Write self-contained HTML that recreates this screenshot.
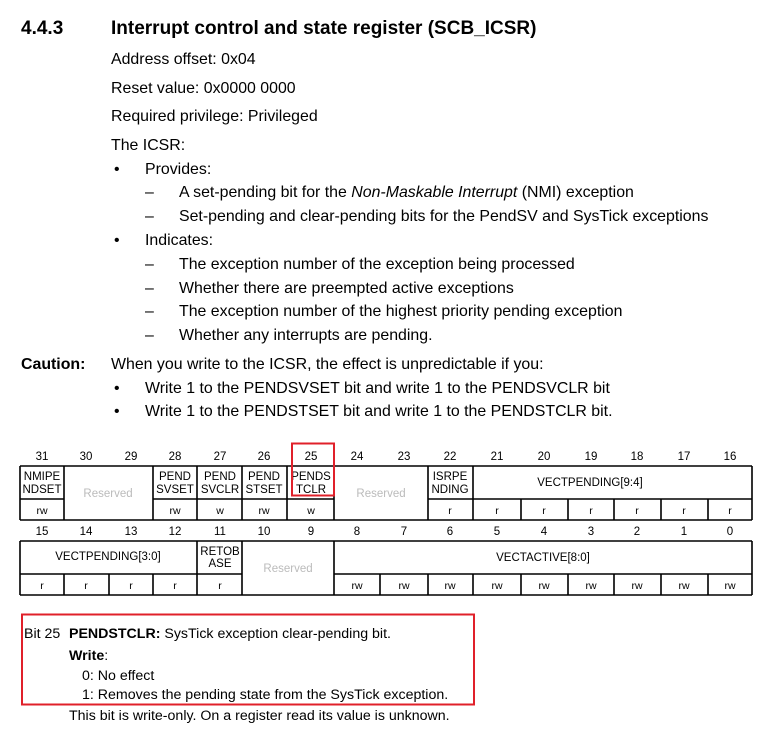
<!DOCTYPE html>
<html><head><meta charset="utf-8"><style>
body{margin:0;width:769px;height:735px;background:#fff;font-family:"Liberation Sans",Arial,sans-serif;color:#000;position:relative;overflow:hidden}
.t{position:absolute;white-space:nowrap;font-size:15.9px;line-height:20px}
.s{position:absolute;white-space:nowrap;font-size:14.2px;line-height:16px}
</style></head><body>
<div class="t" style="left:21px;top:17px;font-size:19px;line-height:24px;font-weight:bold">4.4.3</div>
<div class="t" style="left:111px;top:17px;font-size:19px;line-height:24px;font-weight:bold">Interrupt control and state register (SCB_ICSR)</div>
<div class="t" style="left:111px;top:50px">Address offset: 0x04</div>
<div class="t" style="left:111px;top:79px">Reset value: 0x0000 0000</div>
<div class="t" style="left:111px;top:107px">Required privilege: Privileged</div>
<div class="t" style="left:111px;top:136px">The ICSR:</div>
<div class="t" style="left:114px;top:160px">•</div><div class="t" style="left:145px;top:160px">Provides:</div>
<div class="t" style="left:145px;top:183px">–</div><div class="t" style="left:179px;top:183px">A set-pending bit for the <i>Non-Maskable Interrupt</i> (NMI) exception</div>
<div class="t" style="left:145px;top:207px">–</div><div class="t" style="left:179px;top:207px">Set-pending and clear-pending bits for the PendSV and SysTick exceptions</div>
<div class="t" style="left:114px;top:231px">•</div><div class="t" style="left:145px;top:231px">Indicates:</div>
<div class="t" style="left:145px;top:255px">–</div><div class="t" style="left:179px;top:255px">The exception number of the exception being processed</div>
<div class="t" style="left:145px;top:279px">–</div><div class="t" style="left:179px;top:279px">Whether there are preempted active exceptions</div>
<div class="t" style="left:145px;top:302px">–</div><div class="t" style="left:179px;top:302px">The exception number of the highest priority pending exception</div>
<div class="t" style="left:145px;top:326px">–</div><div class="t" style="left:179px;top:326px">Whether any interrupts are pending.</div>
<div class="t" style="left:21px;top:355px;font-weight:bold">Caution:</div>
<div class="t" style="left:111px;top:355px">When you write to the ICSR, the effect is unpredictable if you:</div>
<div class="t" style="left:114px;top:379px">•</div><div class="t" style="left:145px;top:379px">Write 1 to the PENDSVSET bit and write 1 to the PENDSVCLR bit</div>
<div class="t" style="left:114px;top:402px">•</div><div class="t" style="left:145px;top:402px">Write 1 to the PENDSTSET bit and write 1 to the PENDSTCLR bit.</div>

<svg style="position:absolute;left:0;top:0" width="769" height="735" font-family="Liberation Sans, Arial, sans-serif">
<g stroke="#000" stroke-width="1.6" fill="none">
<line x1="20" y1="466" x2="752" y2="466"/><line x1="20" y1="520" x2="752" y2="520"/>
<line x1="20" y1="499" x2="64" y2="499"/><line x1="153" y1="499" x2="334" y2="499"/><line x1="428" y1="499" x2="752" y2="499"/>
<path d="M20 466V520M64 466V520M153 466V520M197 466V520M242 466V520M287 466V520M334 466V520M428 466V520M473 466V520M752 466V520M521 499V520M568 499V520M614 499V520M661 499V520M708 499V520"/>
<line x1="20" y1="541" x2="752" y2="541"/><line x1="20" y1="595" x2="752" y2="595"/>
<line x1="20" y1="574" x2="242" y2="574"/><line x1="334" y1="574" x2="752" y2="574"/>
<path d="M20 541V595M197 541V595M242 541V595M334 541V595M752 541V595M64 574V595M109 574V595M153 574V595M380 574V595M428 574V595M473 574V595M521 574V595M568 574V595M614 574V595M661 574V595M708 574V595"/>
</g>
<g font-size="11.5" text-anchor="middle" fill="#000">
<text x="42" y="460">31</text><text x="86" y="460">30</text><text x="131" y="460">29</text><text x="175" y="460">28</text><text x="220" y="460">27</text><text x="264" y="460">26</text><text x="311" y="460">25</text><text x="357" y="460">24</text><text x="404" y="460">23</text><text x="450" y="460">22</text><text x="497" y="460">21</text><text x="544" y="460">20</text><text x="591" y="460">19</text><text x="637" y="460">18</text><text x="684" y="460">17</text><text x="730" y="460">16</text>
<text x="42" y="535">15</text><text x="86" y="535">14</text><text x="131" y="535">13</text><text x="175" y="535">12</text><text x="220" y="535">11</text><text x="264" y="535">10</text><text x="311" y="535">9</text><text x="357" y="535">8</text><text x="404" y="535">7</text><text x="450" y="535">6</text><text x="497" y="535">5</text><text x="544" y="535">4</text><text x="591" y="535">3</text><text x="637" y="535">2</text><text x="684" y="535">1</text><text x="730" y="535">0</text>
</g>
<g font-size="11.5" text-anchor="middle" fill="#000">
<text x="42" y="480">NMIPE</text><text x="42" y="493">NDSET</text>
<text x="175" y="480">PEND</text><text x="175" y="493">SVSET</text>
<text x="220" y="480">PEND</text><text x="220" y="493">SVCLR</text>
<text x="264" y="480">PEND</text><text x="264" y="493">STSET</text>
<text x="311" y="480">PENDS</text><text x="311" y="493">TCLR</text>
<text x="450" y="480">ISRPE</text><text x="450" y="493">NDING</text>
<text x="590" y="486">VECTPENDING[9:4]</text>
<text x="108" y="560">VECTPENDING[3:0]</text>
<text x="220" y="555">RETOB</text><text x="220" y="567">ASE</text>
<text x="543" y="561">VECTACTIVE[8:0]</text>
</g>
<g font-size="11.5" text-anchor="middle" fill="#bbb">
<text x="108" y="497">Reserved</text><text x="381" y="497">Reserved</text><text x="288" y="572">Reserved</text>
</g>
<g font-size="10.5" text-anchor="middle" fill="#000">
<text x="42" y="514">rw</text><text x="175" y="514">rw</text><text x="220" y="514">w</text><text x="264" y="514">rw</text><text x="311" y="514">w</text>
<text x="450" y="514">r</text><text x="497" y="514">r</text><text x="544" y="514">r</text><text x="591" y="514">r</text><text x="637" y="514">r</text><text x="684" y="514">r</text><text x="730" y="514">r</text>
<text x="42" y="589">r</text><text x="86" y="589">r</text><text x="131" y="589">r</text><text x="175" y="589">r</text><text x="220" y="589">r</text>
<text x="357" y="589">rw</text><text x="404" y="589">rw</text><text x="450" y="589">rw</text><text x="497" y="589">rw</text><text x="544" y="589">rw</text><text x="591" y="589">rw</text><text x="637" y="589">rw</text><text x="684" y="589">rw</text><text x="730" y="589">rw</text>
</g>
<rect x="292" y="443.5" width="42" height="52" fill="none" stroke="#e0202a" stroke-width="2"/>
<rect x="22" y="614.5" width="452" height="90" fill="none" stroke="#e0202a" stroke-width="2"/>
</svg>

<div class="s" style="left:24px;top:626px">Bit 25</div>
<div class="s" style="left:69px;top:626px"><b>PENDSTCLR:</b> SysTick exception clear-pending bit.</div>
<div class="s" style="left:69px;top:648px"><b>Write</b>:</div>
<div class="s" style="left:82px;top:668px">0: No effect</div>
<div class="s" style="left:82px;top:687px">1: Removes the pending state from the SysTick exception.</div>
<div class="s" style="left:69px;top:708px">This bit is write-only. On a register read its value is unknown.</div>
</body></html>
